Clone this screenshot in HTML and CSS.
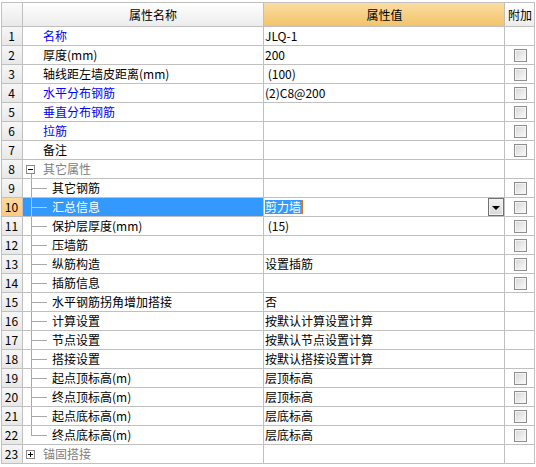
FILE: index.html
```html
<!DOCTYPE html>
<html>
<head>
<meta charset="utf-8">
<link rel="stylesheet" href="styles.css">
</head>
<body>
<div class="grid">
  <div class="c num hd"></div>
  <div class="c name hd center">属性名称</div>
  <div class="c val hd hv center">属性值</div>
  <div class="c add hd center">附加</div>

  <div class="c num">1</div><div class="c name blue">名称</div><div class="c val">JLQ-1</div><div class="c add"></div>
  <div class="c num">2</div><div class="c name">厚度(mm)</div><div class="c val">200</div><div class="c add"><span class="cb"></span></div>
  <div class="c num">3</div><div class="c name">轴线距左墙皮距离(mm)</div><div class="c val">&nbsp;(100)</div><div class="c add"><span class="cb"></span></div>
  <div class="c num">4</div><div class="c name blue">水平分布钢筋</div><div class="c val">(2)C8@200</div><div class="c add"><span class="cb"></span></div>
  <div class="c num">5</div><div class="c name blue">垂直分布钢筋</div><div class="c val"></div><div class="c add"><span class="cb"></span></div>
  <div class="c num">6</div><div class="c name blue">拉筋</div><div class="c val"></div><div class="c add"><span class="cb"></span></div>
  <div class="c num">7</div><div class="c name">备注</div><div class="c val"></div><div class="c add"><span class="cb"></span></div>
  <div class="c num">8</div><div class="c name grp open"><span class="tb minus"></span><span class="gt">其它属性</span></div><div class="c val"></div><div class="c add"></div>
  <div class="c num">9</div><div class="c name"><span class="br"></span>其它钢筋</div><div class="c val"></div><div class="c add"><span class="cb"></span></div>
  <div class="c num sel">10</div><div class="c name selname"><span class="br"></span>汇总信息</div><div class="c val edit"><span class="hl">剪力墙</span><span class="caret"></span><span class="dd"><span class="tri"></span></span></div><div class="c add"><span class="cb"></span></div>
  <div class="c num">11</div><div class="c name"><span class="br"></span>保护层厚度(mm)</div><div class="c val">&nbsp;(15)</div><div class="c add"><span class="cb"></span></div>
  <div class="c num">12</div><div class="c name"><span class="br"></span>压墙筋</div><div class="c val"></div><div class="c add"><span class="cb"></span></div>
  <div class="c num">13</div><div class="c name"><span class="br"></span>纵筋构造</div><div class="c val">设置插筋</div><div class="c add"><span class="cb"></span></div>
  <div class="c num">14</div><div class="c name"><span class="br"></span>插筋信息</div><div class="c val"></div><div class="c add"><span class="cb"></span></div>
  <div class="c num">15</div><div class="c name"><span class="br"></span>水平钢筋拐角增加搭接</div><div class="c val">否</div><div class="c add"></div>
  <div class="c num">16</div><div class="c name"><span class="br"></span>计算设置</div><div class="c val">按默认计算设置计算</div><div class="c add"></div>
  <div class="c num">17</div><div class="c name"><span class="br"></span>节点设置</div><div class="c val">按默认节点设置计算</div><div class="c add"></div>
  <div class="c num">18</div><div class="c name"><span class="br"></span>搭接设置</div><div class="c val">按默认搭接设置计算</div><div class="c add"></div>
  <div class="c num">19</div><div class="c name"><span class="br"></span>起点顶标高(m)</div><div class="c val">层顶标高</div><div class="c add"><span class="cb"></span></div>
  <div class="c num">20</div><div class="c name"><span class="br"></span>终点顶标高(m)</div><div class="c val">层顶标高</div><div class="c add"><span class="cb"></span></div>
  <div class="c num">21</div><div class="c name"><span class="br"></span>起点底标高(m)</div><div class="c val">层底标高</div><div class="c add"><span class="cb"></span></div>
  <div class="c num">22</div><div class="c name"><span class="br last"></span>终点底标高(m)</div><div class="c val">层底标高</div><div class="c add"><span class="cb"></span></div>
  <div class="c num">23</div><div class="c name grp"><span class="tb plus"></span><span class="gt">锚固搭接</span></div><div class="c val"></div><div class="c add"></div>
</div>
</body>
</html>
```
FILE: styles.css
```css
html, body {
  margin: 0;
  padding: 0;
  background: #ffffff;
}
body {
  padding: 2px 0 0 1px;
  font-family: "Noto Sans CJK SC", "Liberation Sans", sans-serif;
  font-size: 12px;
  color: #000;
}
.grid {
  display: grid;
  grid-template-columns: 21px 241px 241px 30px;
  grid-template-rows: 24px;
  grid-auto-rows: 19px;
  width: 533px;
  border-top: 1px solid #c0c0c0;
  border-left: 1px solid #c0c0c0;
}
.c {
  border-right: 1px solid #c0c0c0;
  border-bottom: 1px solid #c0c0c0;
  display: flex;
  align-items: center;
  white-space: nowrap;
  overflow: hidden;
  line-height: 18px;
}
.hd {
  background: linear-gradient(#ffffff, #ececec);
}
.hd.num {
  background: linear-gradient(#fbfbfb, #e9e9e9);
}
.hv {
  background: linear-gradient(#fbdda2, #f2c36a);
}
.center {
  justify-content: center;
}
.num {
  justify-content: center;
  background: linear-gradient(#f6f6f6, #e8e8e8);
  font-size: 12px;
  padding-right: 1px;
}
.num.sel {
  background: linear-gradient(#fdd9a0, #fbcb80);
}
.name {
  padding-left: 20px;
}
.val {
  padding-left: 1px;
}
.blue {
  color: #0000ff;
}
.grp {
  padding-left: 3px;
  color: #808080;
}
.grp.open {
  background: linear-gradient(#a0a0a0, #a0a0a0) no-repeat 8px 100% / 1px 5px;
}
.tb {
  width: 7px;
  height: 7px;
  border: 1px solid #8a8a8a;
  flex: none;
  background-color: #fff;
}
.tb.minus {
  background:
    linear-gradient(#000, #000) no-repeat 1px 3px / 5px 1px,
    #fff;
}
.tb.plus {
  background:
    linear-gradient(#000, #000) no-repeat 1px 3px / 5px 1px,
    linear-gradient(#000, #000) no-repeat 3px 1px / 1px 5px,
    #fff;
}
.gt {
  margin-left: 8px;
}
.name:has(.br) {
  padding-left: 8px;
}
.br {
  align-self: stretch;
  width: 16px;
  margin-right: 5px;
  flex: none;
  background:
    linear-gradient(#a8a8a8, #a8a8a8) no-repeat 0 0 / 1px 100%,
    linear-gradient(#a8a8a8, #a8a8a8) no-repeat 1px 9px / 15px 1px;
}
.br.last {
  background:
    linear-gradient(#a8a8a8, #a8a8a8) no-repeat 0 0 / 1px 10px,
    linear-gradient(#a8a8a8, #a8a8a8) no-repeat 1px 9px / 15px 1px;
}
.selname {
  background: #3399ff;
  color: #fff;
}
.selname .br {
  background:
    linear-gradient(#c8c8c8, #c8c8c8) no-repeat 0 0 / 1px 100%,
    linear-gradient(#c8c8c8, #c8c8c8) no-repeat 1px 9px / 15px 1px;
}
.edit {
  padding-right: 0;
}
.hl {
  background: #3399ff;
  color: #fff;
  line-height: 14px;
}
.caret {
  width: 2px;
  height: 14px;
  background: #e07a10;
}
.dd {
  margin-left: auto;
  align-self: stretch;
  width: 14px;
  border: 1px solid #707070;
  box-shadow: inset 0 0 0 1px #f4f4f4;
  background: linear-gradient(#f2f2f2, #d8d8d8);
  display: flex;
  align-items: center;
  justify-content: center;
}
.tri {
  width: 0;
  height: 0;
  border-left: 4px solid transparent;
  border-right: 4px solid transparent;
  border-top: 4px solid #000;
  margin-top: 1px;
}
.add {
  justify-content: center;
  padding-left: 1px;
}
.cb {
  width: 11px;
  height: 11px;
  border: 1px solid #8e8e8e;
  background: linear-gradient(135deg, #d6d6d6, #fbfbfb);
  box-shadow: inset 0 0 0 1px #f4f4f4;
}
```
